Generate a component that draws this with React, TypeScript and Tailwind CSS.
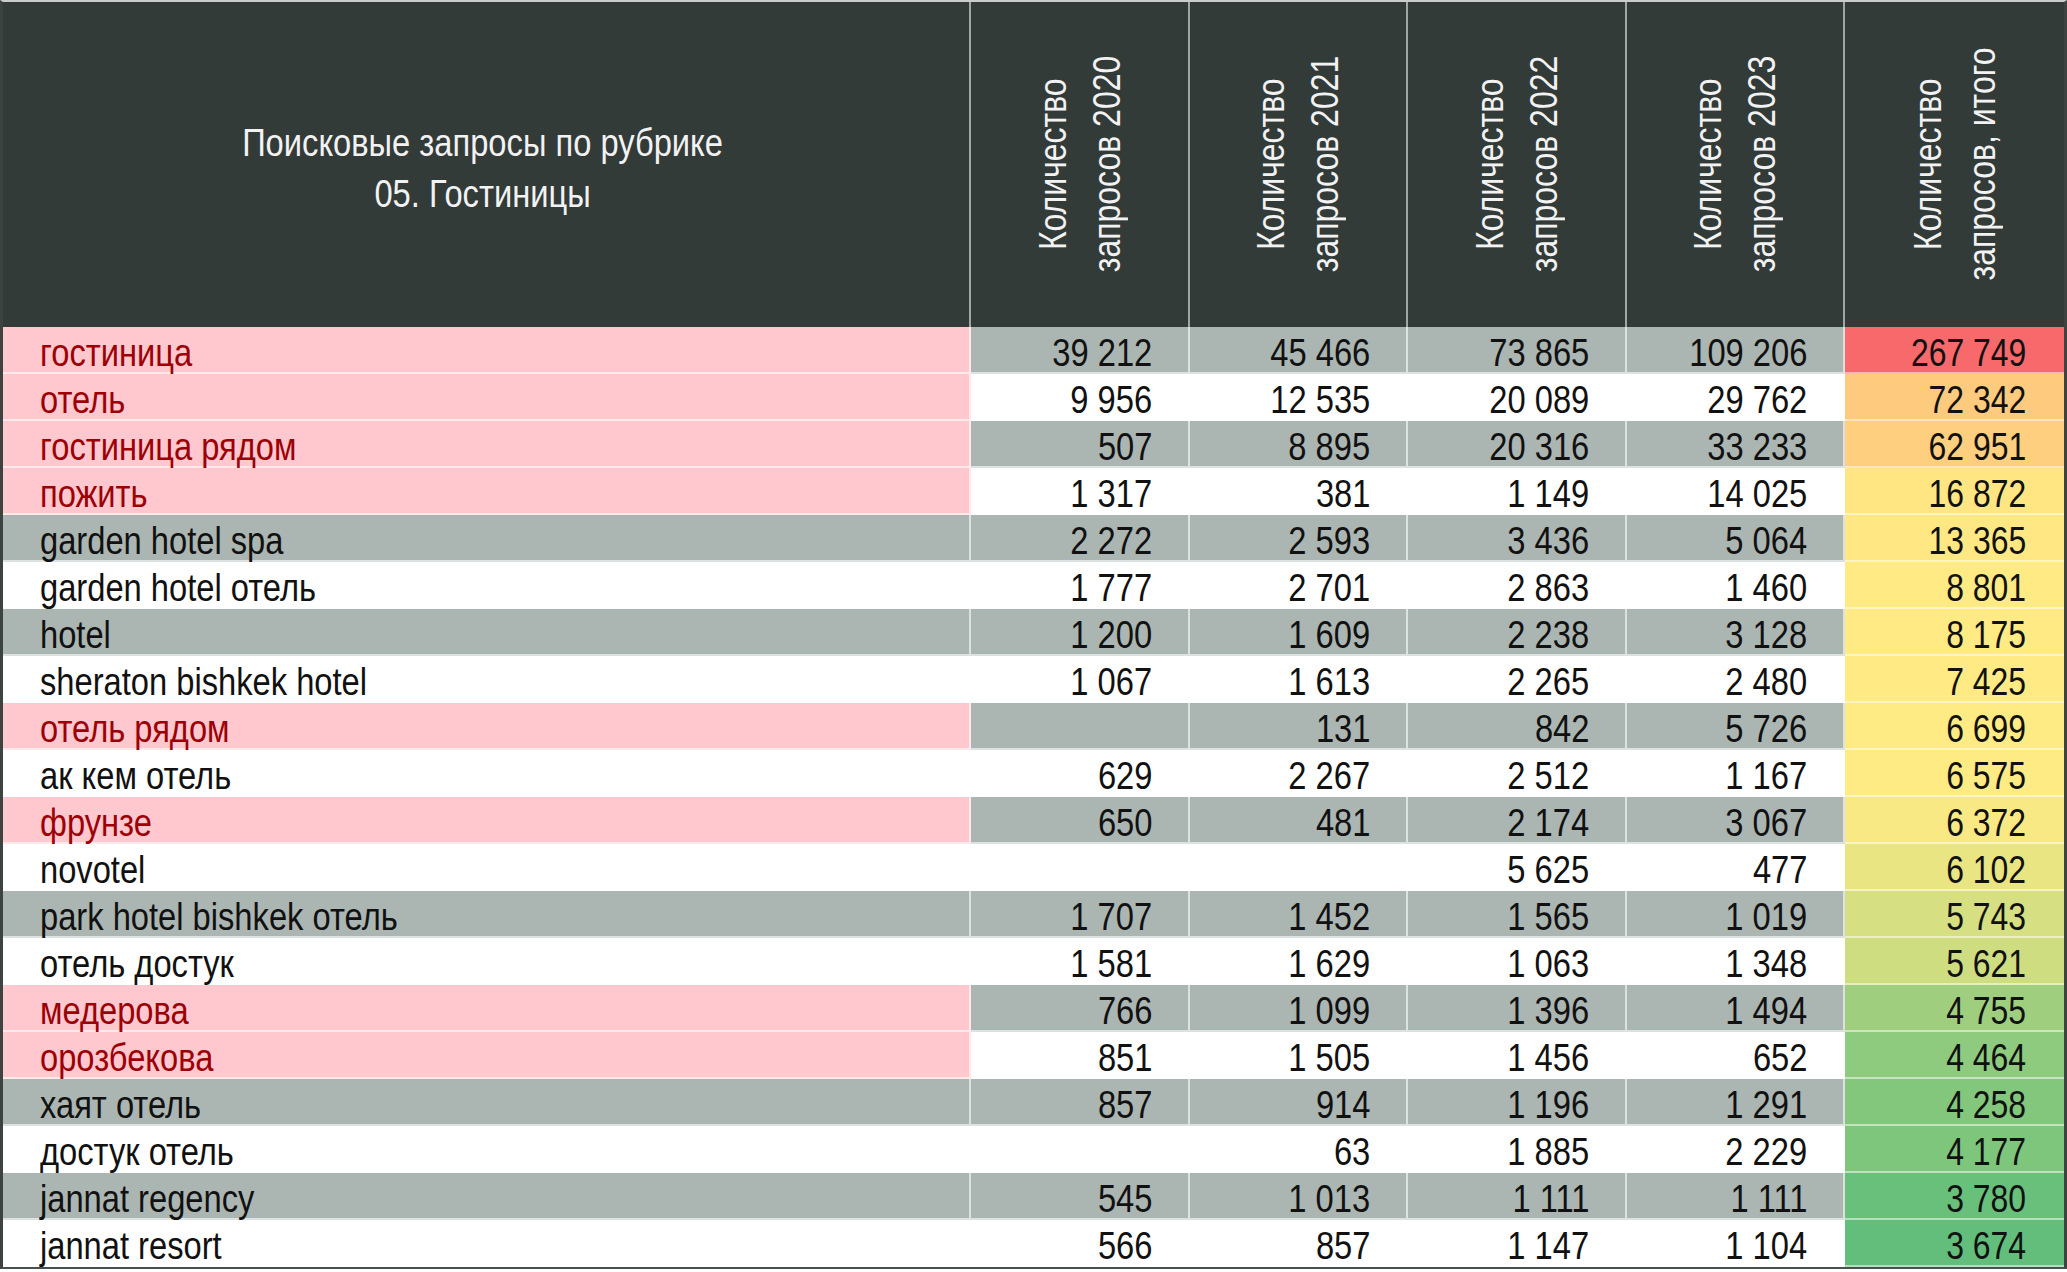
type Row = {
  label: string;
  highlight?: boolean;
  values: string[];
  total: string;
  totalBg: string;
};

const ROWS: Row[] = [
  { label: "гостиница", highlight: true, values: ["39 212", "45 466", "73 865", "109 206"], total: "267 749", totalBg: "bg-[#F8696B]" },
  { label: "отель", highlight: true, values: ["9 956", "12 535", "20 089", "29 762"], total: "72 342", totalBg: "bg-[#FDCA7E]" },
  { label: "гостиница рядом", highlight: true, values: ["507", "8 895", "20 316", "33 233"], total: "62 951", totalBg: "bg-[#FDCF7F]" },
  { label: "пожить", highlight: true, values: ["1 317", "381", "1 149", "14 025"], total: "16 872", totalBg: "bg-[#FFE683]" },
  { label: "garden hotel spa", values: ["2 272", "2 593", "3 436", "5 064"], total: "13 365", totalBg: "bg-[#FFE883]" },
  { label: "garden hotel отель", values: ["1 777", "2 701", "2 863", "1 460"], total: "8 801", totalBg: "bg-[#FFEA84]" },
  { label: "hotel", values: ["1 200", "1 609", "2 238", "3 128"], total: "8 175", totalBg: "bg-[#FFEA84]" },
  { label: "sheraton bishkek hotel", values: ["1 067", "1 613", "2 265", "2 480"], total: "7 425", totalBg: "bg-[#FFEA84]" },
  { label: "отель рядом", highlight: true, values: ["", "131", "842", "5 726"], total: "6 699", totalBg: "bg-[#FFEB84]" },
  { label: "ак кем отель", values: ["629", "2 267", "2 512", "1 167"], total: "6 575", totalBg: "bg-[#FFEB84]" },
  { label: "фрунзе", highlight: true, values: ["650", "481", "2 174", "3 067"], total: "6 372", totalBg: "bg-[#F9E984]" },
  { label: "novotel", values: ["", "", "5 625", "477"], total: "6 102", totalBg: "bg-[#EAE583]" },
  { label: "park hotel bishkek отель", values: ["1 707", "1 452", "1 565", "1 019"], total: "5 743", totalBg: "bg-[#D6DF82]" },
  { label: "отель достук", values: ["1 581", "1 629", "1 063", "1 348"], total: "5 621", totalBg: "bg-[#CFDD81]" },
  { label: "медерова", highlight: true, values: ["766", "1 099", "1 396", "1 494"], total: "4 755", totalBg: "bg-[#9FCF7E]" },
  { label: "орозбекова", highlight: true, values: ["851", "1 505", "1 456", "652"], total: "4 464", totalBg: "bg-[#8FCB7E]" },
  { label: "хаят отель", values: ["857", "914", "1 196", "1 291"], total: "4 258", totalBg: "bg-[#83C77D]" },
  { label: "достук отель", values: ["", "63", "1 885", "2 229"], total: "4 177", totalBg: "bg-[#7FC67D]" },
  { label: "jannat regency", values: ["545", "1 013", "1 111", "1 111"], total: "3 780", totalBg: "bg-[#69C07B]" },
  { label: "jannat resort", values: ["566", "857", "1 147", "1 104"], total: "3 674", totalBg: "bg-[#63BE7B]" },
];

const COLUMNS = [
  { first: "Количество", second: "запросов 2020", width: "w-[219px]" },
  { first: "Количество", second: "запросов 2021", width: "w-[218px]" },
  { first: "Количество", second: "запросов 2022", width: "w-[219px]" },
  { first: "Количество", second: "запросов 2023", width: "w-[218px]" },
  { first: "Количество", second: "запросов, итого", width: "w-[219px]" },
];

// no narrow face installed, so the Arial Narrow look is faked with a horizontal squeeze
const FONT = "font-['Liberation_Sans','Arial',sans-serif]";

function HeaderRow() {
  return (
    <div className="flex h-[325px] bg-[#333b39] text-[#f2f2f2]">
      <div className="flex w-[968px] shrink-0 items-center justify-center border-r-2 border-[#9fa7a5] pt-[8px] pr-[6px] text-center text-[38px] leading-[51px]">
        <div className="origin-center scale-x-[0.86]">
          Поисковые запросы по рубрике
          <br />
          05. Гостиницы
        </div>
      </div>
      {COLUMNS.map((col, i) => (
        <div
          key={col.second}
          className={`flex ${col.width} shrink-0 items-center justify-center ${
            i < COLUMNS.length - 1 ? "border-r-2 border-[#9fa7a5]" : ""
          }`}
        >
          <div className="rotate-180 scale-y-[0.82] text-center text-[39px] leading-[54px] [writing-mode:vertical-rl]">
            {col.first}
            <br />
            {col.second}
          </div>
        </div>
      ))}
    </div>
  );
}

function DataRow({ row, index }: { row: Row; index: number }) {
  const striped = index % 2 === 0;
  const stripeBg = striped ? "bg-[#abb5b2]" : "bg-white";
  const labelBg = row.highlight ? "bg-[#ffc7ce] text-[#9c0006]" : `${stripeBg} text-[#111]`;

  return (
    <div className="flex h-[47px] text-[38px] leading-[53px]">
      <div
        className={`h-[47px] w-[968px] shrink-0 whitespace-nowrap border-b-2 border-r-2 border-white/60 pl-[37px] ${labelBg}`}
      >
        <span className="inline-block origin-left scale-x-[0.86]">{row.label}</span>
      </div>
      {row.values.map((value, i) => (
        <div
          key={i}
          className={`h-[47px] ${COLUMNS[i].width} shrink-0 whitespace-nowrap border-b-2 border-r-2 border-white/60 pr-[36px] text-right text-[#111] ${stripeBg}`}
        >
          <span className="inline-block origin-right scale-x-[0.86]">{value}</span>
        </div>
      ))}
      <div
        className={`h-[47px] ${COLUMNS[4].width} shrink-0 whitespace-nowrap border-b-2 border-white/50 pr-[38px] text-right text-[#111] ${row.totalBg}`}
      >
        <span className="inline-block origin-right scale-x-[0.84]">{row.total}</span>
      </div>
    </div>
  );
}

export default function App() {
  return (
    <div className={`min-h-screen w-[2067px] bg-white ${FONT}`}>
      <div className="w-[2067px] border-x-[3px] border-t-2 border-b-2 border-x-[#3d4341] border-t-[#c9cdcc] border-b-[#4a504e]">
        <HeaderRow />
        {ROWS.map((row, i) => (
          <DataRow key={row.label} row={row} index={i} />
        ))}
      </div>
    </div>
  );
}
